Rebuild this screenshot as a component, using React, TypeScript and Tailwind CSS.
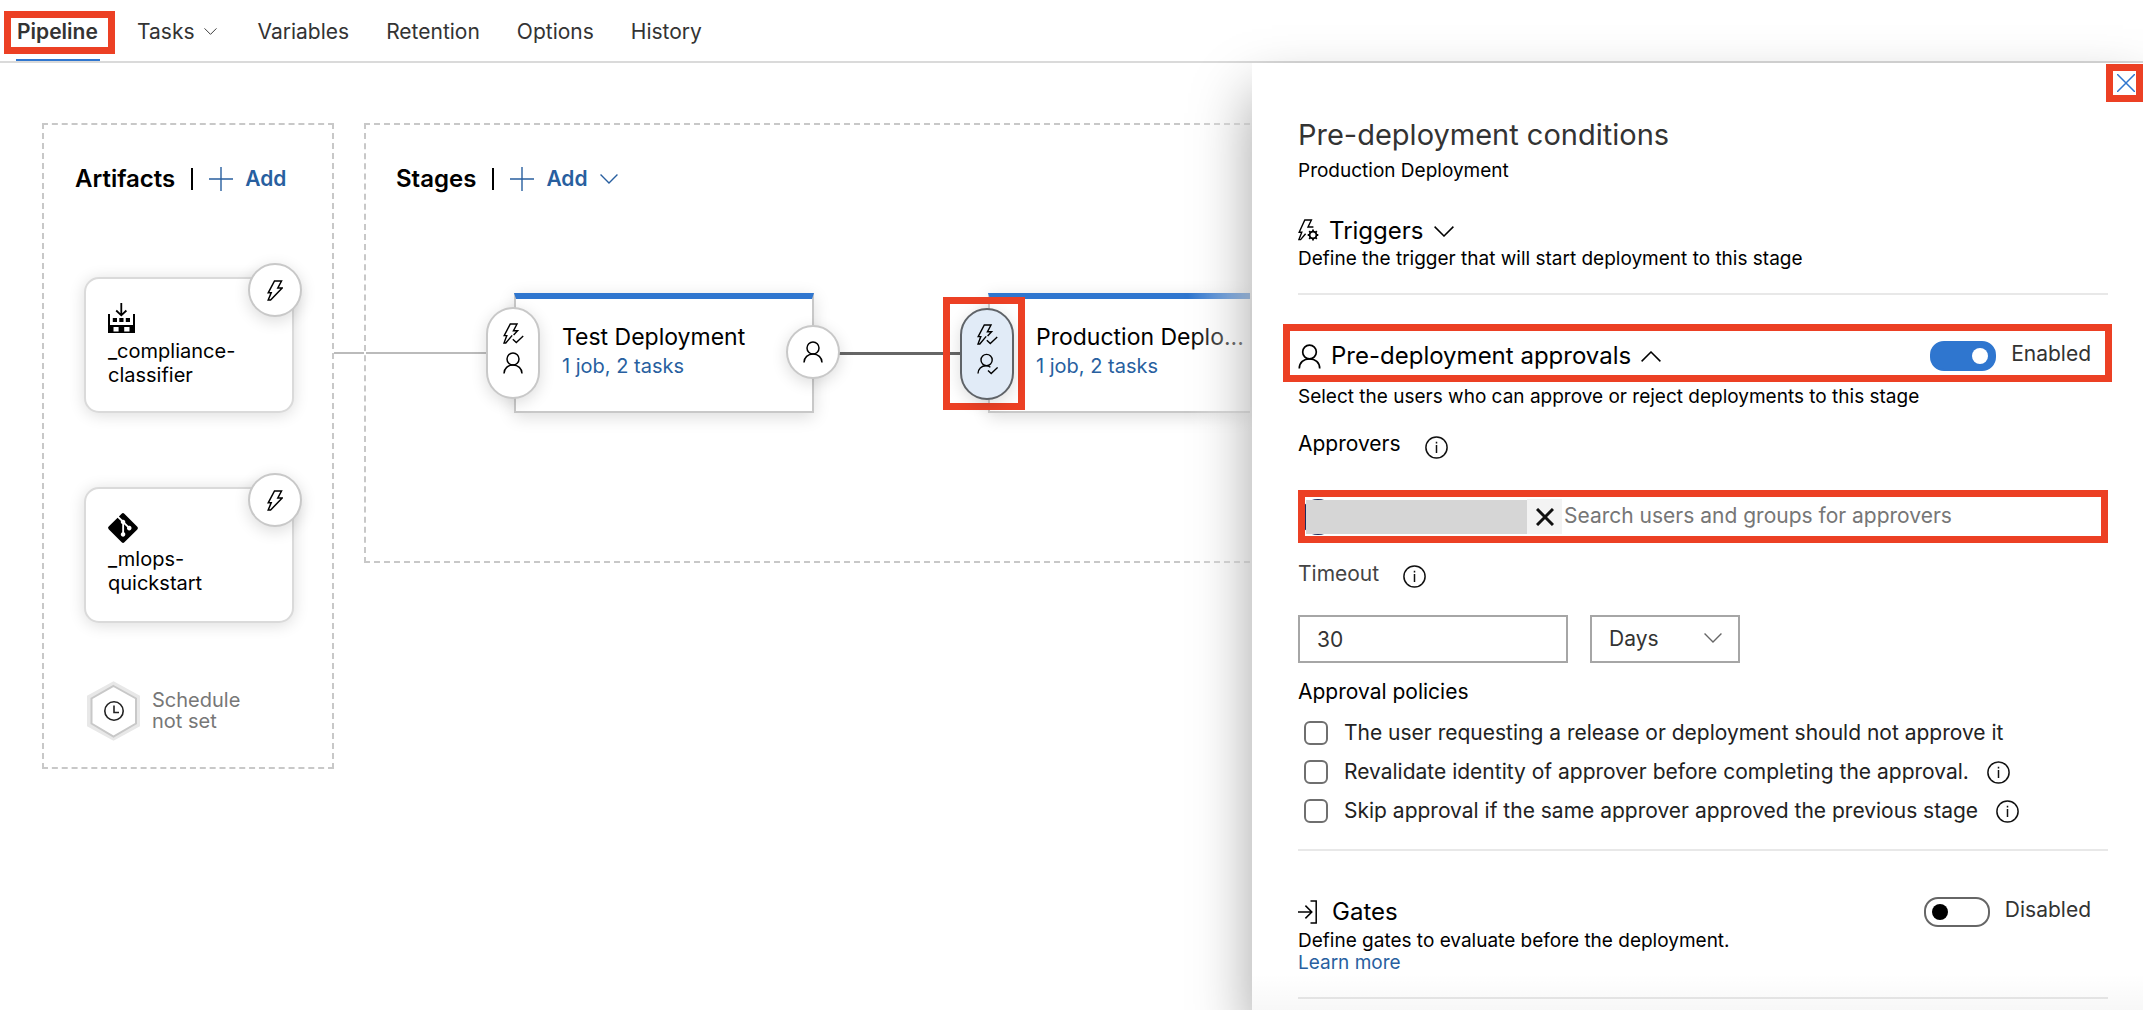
import React from "react";
import { FaGitAlt } from "react-icons/fa";

type IconProps = { className?: string };

function Bolt({ className }: IconProps) {
  return (
    <svg viewBox="0 0 16 21" width="16" height="21" fill="none" stroke="currentColor" strokeWidth="1.5" className={className} aria-hidden="true">
      <path d="M7.5 1H14.5L10.8 8H15.2L3.6 20H1.2L4.2 12.8H1.2Z" />
    </svg>
  );
}

function BoltCheck({ className }: IconProps) {
  return (
    <svg viewBox="0 0 21 21" width="21" height="21" fill="none" stroke="currentColor" strokeWidth="1.4" className={className} aria-hidden="true">
      <path d="M9.2 12.4L2.8 20H1L3.8 12.6H1.2L7.3 1H14L10.4 7.8H14.6L10.6 12" />
      <path d="M9.8 16.2L13.3 19.5L20.2 13" />
    </svg>
  );
}

function BoltGear({ className }: IconProps) {
  return (
    <svg viewBox="0 0 21 22" width="21" height="22" fill="none" stroke="currentColor" strokeWidth="1.4" className={className} aria-hidden="true">
      <path d="M7.6 14.8L2.6 20.6H.9L3.8 13.2H1.2L6.8 1H13.4L10 8H15.4" />
      <circle cx="15" cy="16" r="3.4" strokeWidth="1.8" />
      <path d="M15 10.6v2M15 19.4v2M9.7 16h2M18.3 16h2M11.2 12.2l1.4 1.4M17.4 18.4l1.4 1.4M11.2 19.8l1.4-1.4M17.4 13.6l1.4-1.4" strokeWidth="1.8" />
    </svg>
  );
}

function Person({ className }: IconProps) {
  return (
    <svg viewBox="0 0 20 22" fill="none" stroke="currentColor" strokeWidth="1.5" className={className} aria-hidden="true">
      <circle cx="10" cy="7" r="6" />
      <path d="M1 21.5C1 16.5 5 13 10 13S19 16.5 19 21.5" />
    </svg>
  );
}

function PersonCheck({ className }: IconProps) {
  return (
    <svg viewBox="0 0 21 22" width="21" height="22" fill="none" stroke="currentColor" strokeWidth="1.4" className={className} aria-hidden="true">
      <circle cx="9.6" cy="7" r="5.6" />
      <path d="M1 20.5C1 16 4.4 12.8 9 12.8C11 12.8 12.4 13.4 13.4 14.2" />
      <path d="M11 17.5L14.2 20.6L20.6 14.4" />
    </svg>
  );
}

function Chevron({ className }: IconProps) {
  return (
    <svg viewBox="0 0 20 11" fill="none" stroke="currentColor" strokeWidth="1.5" className={className} aria-hidden="true">
      <path d="M.6 .6L10 10L19.4 .6" />
    </svg>
  );
}

function Plus() {
  return (
    <svg viewBox="0 0 24 24" width="24" height="24" stroke="currentColor" strokeWidth="1.4" aria-hidden="true">
      <path d="M12 0V24M0 12H24" />
    </svg>
  );
}

function BuildIcon() {
  return (
    <svg viewBox="0 0 27 30" width="27" height="30" aria-hidden="true">
      <path d="M13.3 0V12M8.2 7.5L13.3 12.3L18.4 7.5" fill="none" stroke="#000" strokeWidth="1.8" />
      <path d="M0 11h2v11h23V11h2v19h-5.5v-6H16v4.4h-5V24H5.5v6H0Z" />
      <path d="M5 28.4h17V30H5ZM10.6 23.6h5.6V30h-5.6ZM4.8 15h4.2v4H4.8ZM11.3 15h4.2v4h-4.2ZM17.8 15h4.2v4h-4.2Z" />
    </svg>
  );
}

function GatesIcon() {
  return (
    <svg viewBox="0 0 20 24" width="20" height="24" fill="none" stroke="currentColor" strokeWidth="1.5" aria-hidden="true">
      <path d="M0 12H13.5M7.4 5.6L13.8 12L7.4 18.4M12.5 1H18.2V23H12.5" />
    </svg>
  );
}

function ScheduleIcon() {
  return (
    <svg viewBox="0 0 54 60" width="54" height="60" fill="none" aria-hidden="true">
      <path d="M26.5 2.5L51 16V44L26.5 57.5L2 44V16Z" stroke="#e8e8e8" strokeWidth="4" />
      <path d="M26.5 5L49 17.5V42.5L26.5 55.5L4.5 42.5V17.5Z" fill="#fff" stroke="#c8c8c8" strokeWidth="2" />
      <circle cx="27" cy="30" r="9.2" stroke="#222" strokeWidth="1.6" />
      <path d="M27 24.5V31.5H32" stroke="#222" strokeWidth="1.6" />
    </svg>
  );
}

function Info({ label }: { label: string }) {
  return (
    <button type="button" aria-label={label} className="size-[23px] shrink-0">
      <svg viewBox="0 0 23 23" fill="none" stroke="#111" strokeWidth="1.5" aria-hidden="true">
        <circle cx="11.5" cy="11.5" r="10.6" />
        <path d="M11.5 9V17M11.5 5.8V7.6" />
      </svg>
    </button>
  );
}

function Tab({ children }: { children: React.ReactNode }) {
  return (
    <a href="#" className="flex items-center gap-[9px]">
      {children}
    </a>
  );
}

function AreaHeading({ title, menu }: { title: string; menu?: boolean }) {
  return (
    <div className="flex h-[30px] items-center">
      <h2 className="text-[24px] font-semibold">{title}</h2>
      <span className="mx-[16px] h-[22px] w-[2px] bg-black" />
      <button type="button" className="flex items-center gap-[12px] text-[21px] font-semibold text-[#285f9f]">
        <Plus />
        Add
        {menu && <Chevron className="h-[10px] w-[18px]" />}
      </button>
    </div>
  );
}

function ArtifactCard({ icon, lines }: { icon: React.ReactNode; lines: string[] }) {
  return (
    <div className="relative h-[136px] w-[210px] rounded-[15px] border-2 border-[#dadada] bg-white pt-[24px] pl-[22px] shadow-[0_2px_16px_rgba(0,0,0,0.14)]">
      <div className="h-[30px]">{icon}</div>
      <p className="mt-[6px] text-[20px] leading-[24px]">
        {lines[0]}
        <br />
        {lines[1]}
      </p>
      <button
        type="button"
        aria-label="Continuous deployment trigger"
        className="absolute -top-[16px] -right-[10px] flex size-[54px] items-center justify-center rounded-full border-2 border-[#c8c8c8] bg-white shadow-[0_4px_16px_rgba(0,0,0,0.14)]"
      >
        <Bolt />
      </button>
    </div>
  );
}

function StageText({ title }: { title: string }) {
  return (
    <div className="min-w-0 pt-[23px] pl-[46px]">
      <h3 className="text-[23px] leading-[30px] whitespace-nowrap">{title}</h3>
      <a href="#" className="block text-[20px] leading-[28px] text-[#285f9f]">
        1 job, 2 tasks
      </a>
    </div>
  );
}

function Toggle({ on, label }: { on: boolean; label: string }) {
  const [checked, setChecked] = React.useState(on);
  return (
    <div className="flex items-start gap-[15px]">
      <button
        type="button"
        role="switch"
        aria-checked={checked}
        aria-label={label}
        onClick={() => setChecked(!checked)}
        className={
          checked
            ? "flex h-[30px] w-[66px] items-center justify-end rounded-[14px] border-2 border-[#2f76cf] bg-[#2f76cf] px-[6px]"
            : "flex h-[30px] w-[66px] items-center rounded-[14px] border-2 border-[#666] bg-white px-[6px]"
        }
      >
        <span className={checked ? "size-4 rounded-full bg-white" : "size-4 rounded-full bg-black"} />
      </button>
      <span className="text-[21px] leading-[26px] text-[#333]">{checked ? "Enabled" : "Disabled"}</span>
    </div>
  );
}

function Policy({ id, text, info }: { id: string; text: string; info?: boolean }) {
  return (
    <div className="flex h-6 items-center">
      <input id={id} type="checkbox" className="size-6 shrink-0 appearance-none rounded-[6px] border-2 border-[#6f6f6f] bg-white checked:bg-[#2f76cf]" />
      <label htmlFor={id} className="pl-4 text-[21px] leading-6 text-[#222]">
        {text}
      </label>
      {info && (
        <span className="ml-[18px] flex">
          <Info label={"About: " + text} />
        </span>
      )}
    </div>
  );
}

const Rule = () => <hr className="mt-[23px] border-t-2 border-[#e8e8e8]" />;

export default function App() {
  return (
    <div className="flex h-screen flex-col overflow-hidden bg-white font-[Inter,'Liberation_Sans',sans-serif] text-black">
      <nav className="flex h-[63px] shrink-0 items-start border-b-2 border-[#dadada] pl-[4px] text-[21px] text-[#333]">
        <div className="mt-[11px] flex h-[50px] w-[111px] flex-col justify-between">
          <a href="#" aria-current="page" className="flex h-[43px] items-center border-[7px] border-[#ec4024] pb-[2px] pl-[6px] font-semibold">
            Pipeline
          </a>
          <span className="ml-[12px] h-[2px] w-[84px] bg-[#2f76cf]" />
        </div>
        <div className="mt-[10px] ml-[22px] flex h-[43px] items-center gap-[37px]">
          <Tab>
            Tasks
            <Chevron className="mr-[4px] h-[7px] w-[13px]" />
          </Tab>
          <Tab>Variables</Tab>
          <Tab>Retention</Tab>
          <Tab>Options</Tab>
          <Tab>History</Tab>
        </div>
      </nav>

      <main className="flex min-h-0 flex-1">
        <section className="relative flex min-w-0 flex-1 items-start pt-[60px] pr-[2px] pl-[42px]">
          <div className="w-[292px] shrink-0 border-2 border-dashed border-[#c8c8c8] pt-[39px] pb-[27px]">
            <div className="pl-[31px]">
              <AreaHeading title="Artifacts" />
            </div>
            <div className="mt-[83px] flex flex-col gap-[74px] pl-[40px]">
              <ArtifactCard icon={<BuildIcon />} lines={["_compliance-", "classifier"]} />
              <ArtifactCard icon={<FaGitAlt size={34} className="-mt-[2px] -ml-[2px]" />} lines={["_mlops-", "quickstart"]} />
            </div>
            <button type="button" className="mt-[58px] ml-[43px] flex h-[59px] items-center gap-[11px] text-left text-[20px] leading-[21px] text-[#777]">
              <ScheduleIcon />
              <span>
                <span className="block">Schedule</span>
                <span className="block">not set</span>
              </span>
            </button>
          </div>

          <div className="mt-[229px] h-[2px] w-[30px] shrink-0 bg-[#bbb]" />

          <div className="min-w-0 flex-1 border-2 border-r-0 border-dashed border-[#c8c8c8] pt-[39px] pb-[148px]">
            <div className="pl-[30px]">
              <AreaHeading title="Stages" menu />
            </div>
            <div className="mt-[99px] flex items-center">
              <div className="h-[2px] w-[148px] shrink-0 bg-[#bbb]" />
              <div className="relative h-[120px] w-[300px] shrink-0 border-2 border-t-[6px] border-[#c8c8c8] border-t-[#2f76cf] bg-white shadow-[0_4px_16px_rgba(0,0,0,0.14)]">
                <StageText title="Test Deployment" />
                <button
                  type="button"
                  aria-label="Pre-deployment conditions, Test Deployment"
                  className="absolute top-[8px] -left-[30px] flex h-[92px] w-[54px] flex-col items-center gap-[8px] rounded-full border-2 border-[#c8c8c8] bg-white pt-[14px] shadow-[0_4px_16px_rgba(0,0,0,0.14)]"
                >
                  <BoltCheck />
                  <Person className="h-[22px] w-[20px]" />
                </button>
                <button
                  type="button"
                  aria-label="Post-deployment conditions, Test Deployment"
                  className="absolute top-[26px] -right-[28px] flex size-[54px] items-center justify-center rounded-full border-2 border-[#c8c8c8] bg-white shadow-[0_4px_16px_rgba(0,0,0,0.14)]"
                >
                  <Person className="h-[22px] w-[20px]" />
                </button>
              </div>
              <div className="h-[3px] w-[174px] shrink-0 bg-[#666]" />
              <div className="relative h-[120px] min-w-0 flex-1 border-2 border-t-[6px] border-r-0 border-[#c8c8c8] border-t-[#2f76cf] bg-white shadow-[0_4px_16px_rgba(0,0,0,0.14)]">
                <StageText title="Production Deplo..." />
                <div className="absolute -top-[2px] -left-[47px] flex h-[113px] w-[82px] items-center justify-center border-[7px] border-[#ec4024] pl-[6px]">
                  <button
                    type="button"
                    aria-label="Pre-deployment conditions, Production Deployment"
                    className="flex h-[92px] w-[54px] flex-col items-center gap-[8px] rounded-full border-2 border-[#5f6368] bg-[#e1ebf7] pt-[14px] shadow-[0_4px_16px_rgba(0,0,0,0.14)]"
                  >
                    <BoltCheck />
                    <PersonCheck />
                  </button>
                </div>
              </div>
            </div>
          </div>
          <div className="pointer-events-none absolute inset-y-0 right-0 w-[64px] bg-linear-to-r from-white/0 to-white/60" />
        </section>

        <aside className="relative flex w-[891px] shrink-0 flex-col bg-white shadow-[0_30px_56px_rgba(0,0,0,0.36)]">
          <div className="mt-[1px] flex justify-end">
            <button type="button" aria-label="Close" className="flex h-[38px] w-[37px] items-center justify-center border-[7px] border-[#ec4024] pl-[2px] text-[#2f76cf]">
              <svg viewBox="0 0 18 18" width="18" height="18" className="shrink-0" fill="none" stroke="currentColor" strokeWidth="1.5" aria-hidden="true">
                <path d="M0 0L18 18M18 0L0 18" />
              </svg>
            </button>
          </div>
          <div className="pr-[35px] pl-[46px]">
            <h1 className="mt-[13px] text-[29px] leading-[40px] text-[#333]">Pre-deployment conditions</h1>
            <p className="mt-1 text-[19px] leading-[24px]">Production Deployment</p>

            <button type="button" className="mt-[33px] flex h-[30px] items-center gap-[10px] text-[24px] leading-[30px]">
              <BoltGear className="-mt-[2px]" />
              Triggers
              <Chevron className="h-[11px] w-[20px]" />
            </button>
            <p className="mt-[2px] text-[19px] leading-[22px]">Define the trigger that will start deployment to this stage</p>
            <Rule />

            <div className="mt-[29px] -mr-[4px] -ml-[15px] flex h-[58px] items-start justify-between border-[7px] border-[#ec4024] pt-[10px] pr-[14px] pl-[8px]">
              <button type="button" className="flex h-[30px] items-center gap-[10px] text-[24px] leading-[30px]">
                <Person className="h-[25px] w-[23px]" />
                Pre-deployment approvals
                <Chevron className="h-[11px] w-[20px] rotate-180" />
              </button>
              <Toggle on label="Pre-deployment approvals" />
            </div>
            <p className="mt-[4px] text-[19px] leading-[22px]">Select the users who can approve or reject deployments to this stage</p>

            <div className="mt-[22px] flex h-[28px] items-start gap-[24px] text-[21px] leading-[28px]">
              <label htmlFor="approvers">Approvers</label>
              <span className="mt-[6px] flex">
                <Info label="About approvers" />
              </span>
            </div>
            <div className="mt-[32px] flex h-[53px] items-center border-[7px] border-[#ec4024]">
              <span className="relative flex h-[36px] w-[222px] shrink-0 items-center overflow-hidden">
                <span className="absolute top-0 -left-[5px] size-[36px] rounded-full bg-[#1b2a5e]" />
                <span className="relative ml-px h-[34px] flex-1 bg-[#d6d6d6]" />
              </span>
              <button type="button" aria-label="Remove approver" className="flex h-[35px] w-[35px] shrink-0 items-center justify-center bg-[#f3f3f3]">
                <svg viewBox="0 0 18 18" width="18" height="18" fill="none" stroke="#111" strokeWidth="3" aria-hidden="true">
                  <path d="M1 1L17 17M17 1L1 17" />
                </svg>
              </button>
              <input
                id="approvers"
                type="text"
                placeholder="Search users and groups for approvers"
                className="min-w-0 flex-1 bg-transparent pb-[2px] pl-[2px] text-[21px] leading-[24px] outline-none placeholder:text-[#767676]"
              />
            </div>

            <div className="mt-[17px] flex h-[28px] items-start gap-[24px] text-[21px] leading-[28px] text-[#444]">
              <label htmlFor="timeout">Timeout</label>
              <span className="mt-[5px] flex">
                <Info label="About timeout" />
              </span>
            </div>
            <div className="mt-[27px] flex gap-[22px] text-[21px] text-[#333]">
              <input id="timeout" type="text" defaultValue="30" className="h-[48px] w-[270px] border-2 border-[#a6a6a6] px-[17px] outline-none" />
              <div className="relative">
                <select aria-label="Timeout unit" className="h-[48px] w-[150px] appearance-none border-2 border-[#a6a6a6] bg-white px-[17px] outline-none">
                  <option>Days</option>
                  <option>Hours</option>
                  <option>Minutes</option>
                </select>
                <Chevron className="pointer-events-none absolute top-[18px] right-[18px] h-[10px] w-[18px] text-[#666]" />
              </div>
            </div>

            <fieldset className="mt-[15px] pb-[3px]">
              <legend className="text-[21px] leading-[28px]">Approval policies</legend>
              <div className="mt-[15px] flex flex-col gap-[15px] pl-[6px]">
                <Policy id="p1" text="The user requesting a release or deployment should not approve it" />
                <Policy id="p2" text="Revalidate identity of approver before completing the approval." info />
                <Policy id="p3" text="Skip approval if the same approver approved the previous stage" info />
              </div>
            </fieldset>
            <Rule />

            <div className="mt-[46px] flex items-start justify-between pr-[17px]">
              <h2 className="flex h-[30px] items-center gap-[14px] text-[24px] leading-[30px]">
                <GatesIcon />
                Gates
              </h2>
              <Toggle on={false} label="Gates" />
            </div>
            <p className="mt-[3px] text-[19px] leading-[22px]">Define gates to evaluate before the deployment.</p>
            <a href="#" className="block w-fit text-[19px] leading-[22px] text-[#285f9f]">
              Learn more
            </a>
            <Rule />
          </div>
          <div className="pointer-events-none absolute inset-x-0 bottom-0 h-[36px] bg-linear-to-t from-black/3 to-transparent" />
        </aside>
      </main>
    </div>
  );
}
